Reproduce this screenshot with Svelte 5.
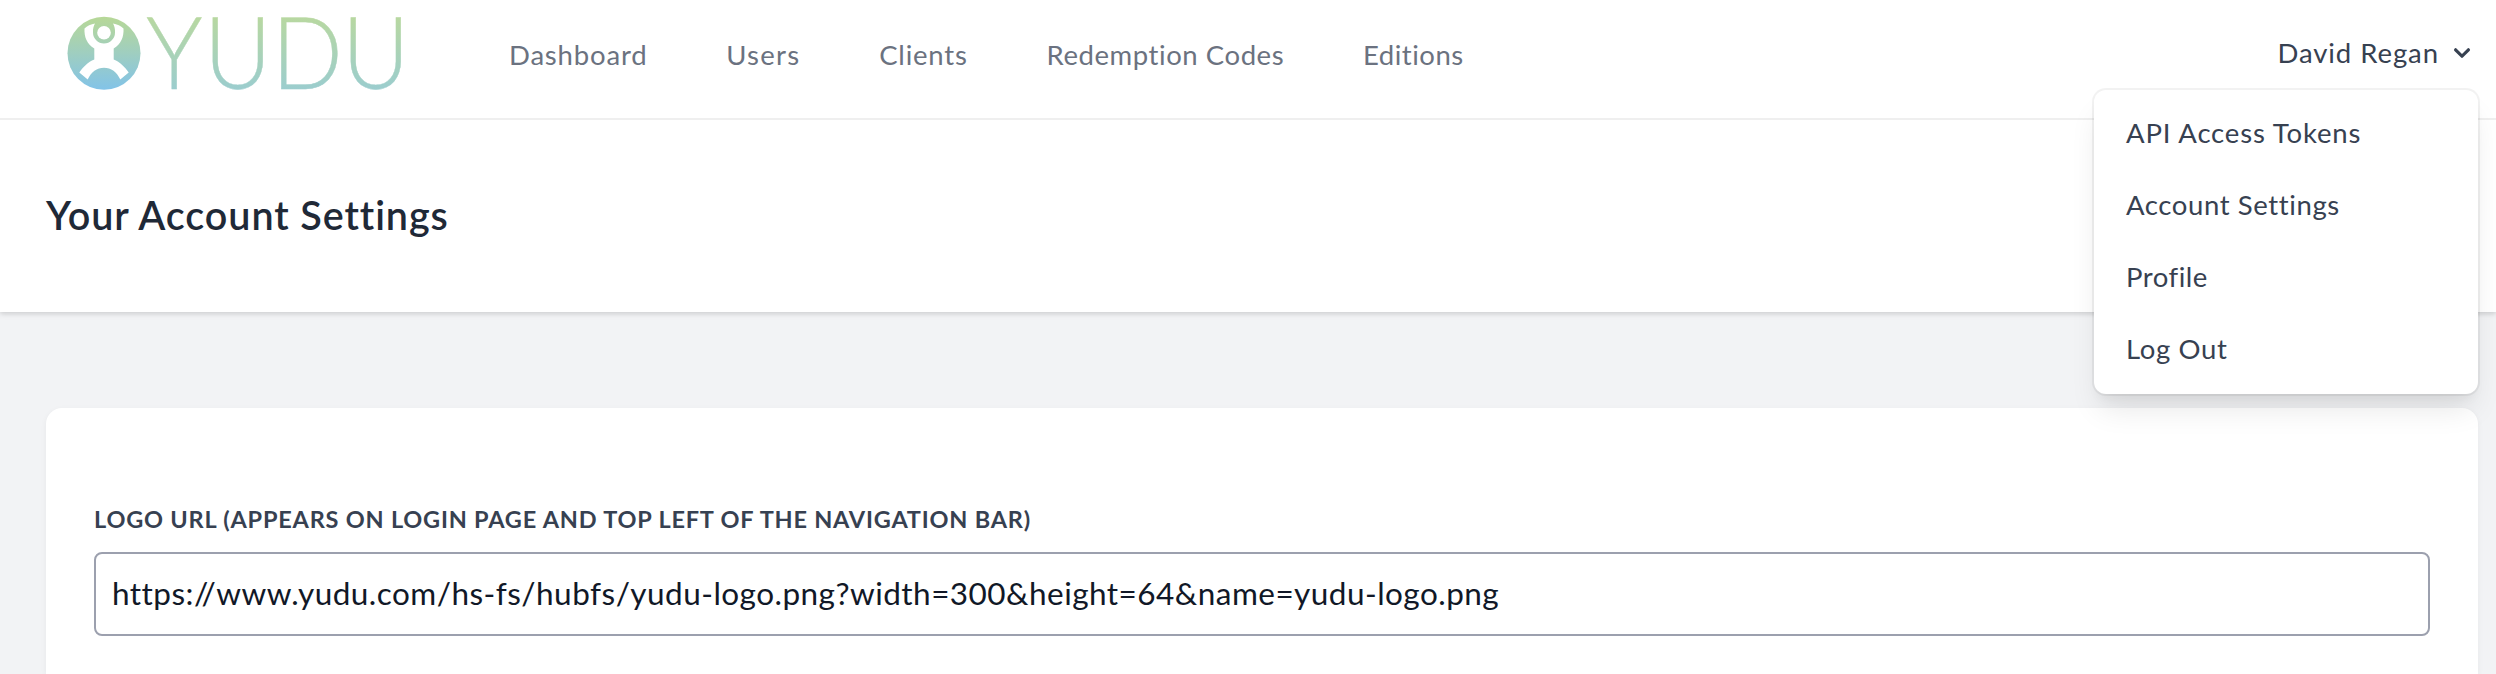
<script lang="ts">
  const links = [
    { label: 'Dashboard', spacing: 0.82 },
    { label: 'Users', spacing: 1.27 },
    { label: 'Clients', spacing: 0.8 },
    { label: 'Redemption Codes', spacing: 0.57 },
    { label: 'Editions', spacing: 0.52 }
  ];

  const menu = [
    { label: 'API Access Tokens', spacing: 0.84 },
    { label: 'Account Settings', spacing: 0.61 },
    { label: 'Profile', spacing: 0.52 },
    { label: 'Log Out', spacing: 0.65 }
  ];

  let open = $state(true);
  let logoUrl = $state('https://www.yudu.com/hs-fs/hubfs/yudu-logo.png?width=300&height=64&name=yudu-logo.png');
</script>

<nav class="navbar">
  <svg class="logo" viewBox="0 0 340 80" role="img" aria-label="YUDU">
    <defs>
      <linearGradient id="badge" x1="0" y1="0" x2="0" y2="1">
        <stop offset="0" stop-color="#b7d897" />
        <stop offset="0.5" stop-color="#9fcec0" />
        <stop offset="1" stop-color="#82c3e8" />
      </linearGradient>
      <linearGradient id="word" gradientUnits="userSpaceOnUse" x1="0" y1="-73" x2="0" y2="0">
        <stop offset="0" stop-color="#b8d8a0" />
        <stop offset="1" stop-color="#9bcdce" />
      </linearGradient>
    </defs>
    <circle cx="38" cy="40.3" r="36.5" fill="url(#badge)" />
    <path
      fill="#fff"
      d="M29 10.500C25 11 21 13 18.500 15.500C18 24 21 31 28.300 35.500V46.500C22 49 17 54 13.300 59.500L21.700 66.500C25 59 31 54.700 38 54.700S51 59 54.300 66.500L62.700 59.500C59 54 54 49 47.700 46.500V35.500C55 31 58 24 57.500 15.500C55 13 51 11 47 10.500C48.500 13 49.200 16 49 19.500A11 11 0 0 1 27 19.500C26.800 16 27.500 13 29 10.500Z"
    />
    <circle cx="38" cy="19.700" r="6.800" fill="#fff" />
    <g class="wordmark" fill="url(#word)" stroke="url(#word)" stroke-width="0.4">
      <text transform="translate(80 76.300) scale(0.95 1)">Y</text>
      <text transform="translate(138 76.300) scale(0.93 1)">U</text>
      <text transform="translate(205.500 76.300) scale(0.94 1)">D</text>
      <text transform="translate(276 76.300) scale(0.93 1)">U</text>
    </g>
  </svg>

  <div class="links">
    {#each links as link}
      <a href="#top" style="letter-spacing: {link.spacing}px">{link.label}</a>
    {/each}
  </div>

  <div class="user">
    <button class="trigger" onclick={() => (open = !open)}>
      <span>David Regan</span>
      <svg class="chevron" viewBox="0 0 20 20" fill="currentColor">
        <path
          fill-rule="evenodd"
          clip-rule="evenodd"
          d="M5.293 7.293a1 1 0 011.414 0L10 10.586l3.293-3.293a1 1 0 111.414 1.414l-4 4a1 1 0 01-1.414 0l-4-4a1 1 0 010-1.414z"
        />
      </svg>
    </button>
    {#if open}
      <div class="dropdown">
        {#each menu as item}
          <a href="#top" style="letter-spacing: {item.spacing}px">{item.label}</a>
        {/each}
      </div>
    {/if}
  </div>
</nav>

<header class="page-header">
  <h2>Your Account Settings</h2>
</header>

<main>
  <div class="card">
    <label for="logo-url">Logo URL (appears on login page and top left of the navigation bar)</label>
    <input id="logo-url" type="text" bind:value={logoUrl} />
  </div>
</main>

<style>
  :global(body) {
    background: #f2f3f5;
    font-family: Lato, "Noto Sans", sans-serif;
  }
  a { text-decoration: none; color: inherit; }

  .navbar {
    position: relative;
    z-index: 1;
    display: flex;
    align-items: center;
    box-sizing: border-box;
    height: 120px;
    padding: 0 18px 0 66px;
    background: white;
    border-bottom: 2px solid #efefef;
  }
  .logo { width: 340px; height: 80px; margin-bottom: 12px; overflow: visible; }
  .wordmark { font-size: 100px; font-weight: 300; }

  .links {
    display: flex;
    gap: 78.8px;
    margin-left: 103px;
    padding-bottom: 9px;
    font-size: 27.5px;
    line-height: 40px;
    color: #6b7280;
  }

  .user { position: relative; margin-left: auto; }
  .trigger {
    display: flex;
    align-items: center;
    gap: 7px;
    padding: 0 0 13px;
    border: 0;
    background: none;
    font: 27.5px/40px Lato, "Noto Sans", sans-serif;
    letter-spacing: 0.93px;
    color: #374151;
  }
  .chevron { width: 32px; height: 32px; }

  .dropdown {
    position: absolute;
    top: 57.5px;
    right: 0;
    z-index: 10;
    width: 384px;
    box-sizing: border-box;
    padding: 8px 0;
    border-radius: 12px;
    background: white;
    box-shadow:
      0 0 0 2px rgba(0, 0, 0, 0.05),
      0 20px 30px -6px rgba(0, 0, 0, 0.1),
      0 8px 12px -4px rgba(0, 0, 0, 0.05);
  }
  .dropdown a {
    display: block;
    padding: 15px 32px 17px;
    font-size: 27.5px;
    line-height: 40px;
    color: #374151;
  }

  .page-header {
    position: relative;
    box-sizing: border-box;
    height: 192px;
    padding: 70px 46px 0;
    background: white;
    box-shadow: 0 2px 6px rgba(0, 0, 0, 0.1), 0 2px 4px rgba(0, 0, 0, 0.06);
  }
  .page-header h2 {
    margin: 0;
    font-size: 39.5px;
    font-weight: 600;
    line-height: 50px;
    letter-spacing: 0.92px;
    color: #1f2937;
  }

  main { padding: 96px 18px 0 46px; }
  .card {
    box-sizing: border-box;
    height: 266px;
    padding: 91px 48px 0;
    border-radius: 16px 16px 0 0;
    background: white;
    box-shadow: 0 2px 6px rgba(0, 0, 0, 0.05);
  }
  label {
    display: block;
    margin-bottom: 13px;
    font-size: 23.5px;
    font-weight: 700;
    line-height: 40px;
    letter-spacing: 0.79px;
    text-transform: uppercase;
    color: #374151;
  }
  input {
    display: block;
    box-sizing: border-box;
    width: 100%;
    height: 84px;
    padding: 0 16px 3px;
    border: 2px solid #9ca0ae;
    border-radius: 8px;
    background: white;
    font: 31.5px/48px Lato, "Noto Sans", sans-serif;
    letter-spacing: 0.47px;
    color: #111827;
  }
</style>
